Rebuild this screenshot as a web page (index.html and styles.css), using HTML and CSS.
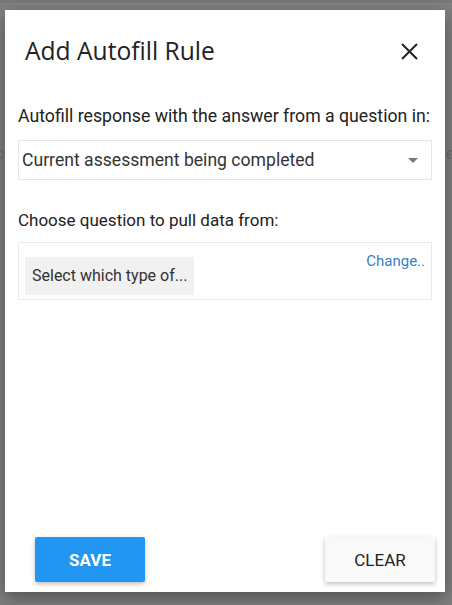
FILE: index.html
```html
<!DOCTYPE html>
<html>
<head>
<meta charset="utf-8">
<link rel="stylesheet" href="styles.css">
</head>
<body>
<div class="backdrop">
  <div class="bg-topbar"></div>
  <span class="bg-letter bg-left">c</span>
  <span class="bg-letter bg-right">e</span>
  <div class="modal">
    <div class="modal-header">
      <h2 class="modal-title">Add Autofill Rule</h2>
      <button class="close-btn" aria-label="Close">
        <svg width="17" height="17" viewBox="0 0 17 17"><path d="M1 1 L16 16 M16 1 L1 16" stroke="#222" stroke-width="2" fill="none"/></svg>
      </button>
    </div>
    <div class="modal-body">
      <label class="field-label first">Autofill response with the answer from a question in:</label>
      <div class="select-box">
        <span class="select-text">Current assessment being completed</span>
        <span class="select-arrow"></span>
      </div>
      <label class="field-label second">Choose question to pull data from:</label>
      <div class="question-box">
        <span class="question-chip">Select which type of...</span>
        <a class="change-link">Change..</a>
      </div>
    </div>
    <div class="modal-footer">
      <button class="btn btn-save">SAVE</button>
      <button class="btn btn-clear">CLEAR</button>
    </div>
  </div>
</div>
</body>
</html>
```
FILE: styles.css
```css
html, body {
  margin: 0;
  padding: 0;
  height: 100%;
}
body {
  background: #7f7f7f;
  font-family: Roboto, "Liberation Sans", sans-serif;
  overflow: hidden;
}
.backdrop {
  position: relative;
  height: 605px;
  padding-top: 10px;
  box-sizing: border-box;
}
.bg-topbar {
  position: absolute;
  left: 0;
  right: 0;
  top: 0;
  height: 3px;
  background: #777;
  border-bottom: 1px solid #858585;
}
.bg-letter {
  position: absolute;
  top: 143px;
  font-size: 17px;
  color: #6a6a6a;
}
.bg-left { left: -5px; }
.bg-right { left: 446px; }
.modal {
  position: relative;
  margin-left: 5px;
  width: 440px;
  height: 582px;
  background: #fff;
  box-shadow: 0 6px 16px rgba(0,0,0,0.35);
  display: flex;
  flex-direction: column;
}
.modal-header {
  display: flex;
  align-items: center;
  justify-content: space-between;
  padding: 25px 27px 0 20px;
  height: 32px;
}
.modal-title {
  margin: 0;
  font-family: "Open Sans", sans-serif;
  font-weight: 400;
  font-size: 24.6px;
  line-height: 32px;
  color: #222;
}
.close-btn {
  border: 0;
  background: none;
  padding: 0;
  width: 17px;
  height: 17px;
  margin-top: 0;
  display: block;
}
.close-btn svg { display: block; }
.modal-body {
  flex: 1;
  padding: 0 13px;
  display: flex;
  flex-direction: column;
}
.field-label {
  display: block;
  font-size: 17px;
  line-height: 20px;
  color: #222;
  white-space: nowrap;
}
.field-label.first {
  font-size: 17.7px;
  margin-top: 39px;
  margin-right: -10px;
}
.field-label.second {
  margin-top: 30px;
}
.select-box {
  margin-top: 14px;
  height: 38px;
  border: 1px solid #e6e6e6;
  display: flex;
  align-items: center;
  justify-content: space-between;
  padding: 0 13px 0 3px;
}
.select-text {
  font-size: 17.6px;
  color: #333;
}
.select-arrow {
  width: 0;
  height: 0;
  border-left: 5px solid transparent;
  border-right: 5px solid transparent;
  border-top: 5px solid #777;
}
.question-box {
  margin-top: 12px;
  height: 56px;
  border: 1px solid #e9e9e9;
  display: flex;
  align-items: flex-start;
  justify-content: space-between;
  padding: 0 6px 0 6px;
}
.question-chip {
  margin-top: 14px;
  background: #f1f1f1;
  height: 38px;
  line-height: 38px;
  padding: 0 7px;
  font-size: 16px;
  color: #333;
}
.change-link {
  margin-top: 9px;
  font-size: 15px;
  color: #3b7fc4;
  cursor: pointer;
}
.modal-footer {
  display: flex;
  justify-content: space-between;
  padding: 0 10px 10px 30px;
}
.btn {
  width: 110px;
  height: 45px;
  border: 0;
  border-radius: 2px;
  font-family: Roboto, sans-serif;
  font-size: 17px;
  cursor: pointer;
}
.btn-save {
  background: #2196f3;
  color: #fff;
  font-weight: 700;
  box-shadow: 0 2px 4px rgba(0,0,0,0.25);
}
.btn-clear {
  background: #f9f9f9;
  color: #222;
  box-shadow: 0 2px 5px rgba(0,0,0,0.25);
}
```
